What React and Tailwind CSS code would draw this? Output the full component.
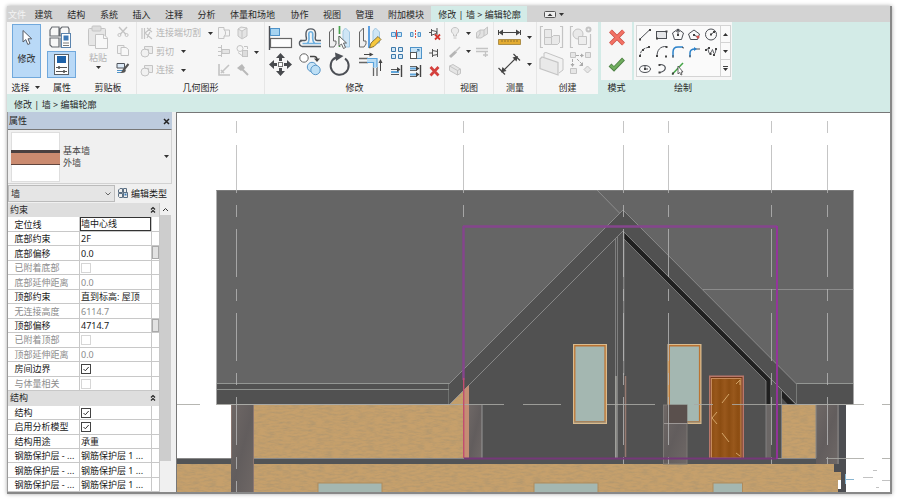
import React from "react";

function Icon({ w = 12, h = 12, box, className = "", children }) {
  return (
    <svg
      width={w}
      height={h}
      viewBox={box || `0 0 ${w} ${h}`}
      fill="none"
      className={"block shrink-0 " + className}
    >
      {children}
    </svg>
  );
}

const Arrow = ({ className = "" }) => (
  <Icon w={5} h={3} className={className}>
    <path d="M0 0H5L2.5 3Z" fill="#333" />
  </Icon>
);

function Panel({ width, label, border = true, teal, arrow, children }) {
  return (
    <div className={`flex shrink-0 flex-col bg-[#f6f6f6] ${width} ${border ? "border-r border-[#e6e6e6]" : ""}`}>
      <div className="h-[58px] shrink-0">{children}</div>
      <div className={`flex h-[14px] items-center justify-center gap-[5px] pt-px ${teal ? "bg-[#d3ebe7]" : ""}`}>
        <span>{label}</span>
        {arrow && <Arrow />}
      </div>
    </div>
  );
}

const G = "#c4c4c4";
const D = "#4c4f55";
const B = "#4f93c9";

/* ---- ribbon panels ---- */

function SelectPanel() {
  return (
    <Panel width="w-[37px]" label="选择" border={false} arrow>
      <div className="ml-[5px] flex h-full items-start pt-[2px]">
        <div className="flex h-[54px] w-[29px] flex-col items-center border border-[#70a8dc] bg-[#b9d9f7]">
          <Icon w={12} h={18} className="mt-[4px]">
            <path d="M2 1.5V13L4.8 10.6L6.8 15.5L9 14.5L7 9.8H10.7Z" fill="#fff" stroke="#555b66" strokeWidth="1" />
          </Icon>
          <span className="mt-[6px]">修改</span>
        </div>
      </div>
    </Panel>
  );
}

function PropertiesPanel() {
  return (
    <Panel width="w-[36px]" label="属性" border={false}>
      <div className="flex h-full flex-col items-start pl-[3px] pt-[3px]">
        <Icon w={28} h={26}>
          <path d="M3 5L5 2H12V11H3ZM13 4L15 2H21L22 4V11H13ZM3 13H12V22H5L3 20ZM14 13H18V22H14Z" stroke="#666a70" strokeWidth="1.2" fill="#f7f7f7" />
          <rect x="14.5" y="8.5" width="9" height="14" fill="#fff" stroke="#5b84ae" />
          <rect x="16.5" y="10.5" width="5" height="5" fill="#3d78b5" />
          <path d="M16 18H22M16 20.5H22" stroke="#555" strokeWidth=".8" />
        </Icon>
        <div className="flex h-[27px] w-[29px] items-center justify-center border border-[#70a8dc] bg-[#b9d9f7]">
          <Icon w={17} h={23}>
            <rect x="1.5" y="1.5" width="14" height="20" fill="#fff" stroke="#5c6167" />
            <rect x="4" y="3" width="9" height="7" fill="#1e62a8" />
            <path d="M3 14.5H14M3 18.500H14" stroke="#555" />
            <path d="M6 13V16M11 17V20" stroke="#555" strokeWidth="1.5" />
          </Icon>
        </div>
      </div>
    </Panel>
  );
}

function ClipboardPanel() {
  return (
    <Panel width="w-[57px]" label="剪贴板">
      <div className="flex h-full pl-[7px] pt-[3px]">
        <div className="flex w-[22px] flex-col items-center text-[#b4b4b4]">
          <Icon w={22} h={25}>
            <rect x="1.500" y="3.500" width="17" height="17" rx="1" fill="#e6e6e6" stroke={G} />
            <rect x="5" y="1" width="9" height="5" rx="1" fill="#ddd" stroke={G} />
            <path d="M8.500 9.500H17L20.500 13V23.500H8.500Z" fill="#f8f8f8" stroke={G} />
            <path d="M16.500 10V13.500H20" stroke={G} />
          </Icon>
          <span className="mt-[2px] whitespace-nowrap">粘贴</span>
          <Arrow className="mt-[2px]" />
        </div>
        <div className="ml-[7px] flex flex-col gap-[4px]">
          <Icon w={14} h={14}>
            <path d="M3 2L10 9.500M11 2L4 9.500" stroke={G} strokeWidth="1.400" />
            <circle cx="3.400" cy="10" r="1.500" stroke={G} /><circle cx="10.600" cy="10" r="1.500" stroke={G} />
          </Icon>
          <Icon w={14} h={14}>
            <path d="M1.500 2.500H8V10.500H1.500Z" fill="#f3f3f3" stroke={G} />
            <path d="M5 4.500H10L12.500 6.500V12.500H5Z" fill="#f8f8f8" stroke={G} />
          </Icon>
          <Icon w={14} h={15}>
            <path d="M1 2.500H8.500V7H1Z" fill="#dceaf7" stroke="#50555d" />
            <path d="M1 9.500H7M1 11.500H5" stroke="#4f93c9" />
            <path d="M12.500 3L8 8.500" stroke="#555" strokeWidth="2" />
            <path d="M8 7.500C6 8 6.500 11 4 12C8 12.500 10 11 9.800 9Z" fill="#555" />
          </Icon>
        </div>
      </div>
    </Panel>
  );
}

const StackIcon = () => (
  <Icon w={14} h={13}>
    <path d="M4.500 4V1.500H12.500V8.500H9" fill="#ececec" stroke={G} />
    <circle cx="5" cy="8" r="4" fill="#f1f1f1" stroke={G} />
    <path d="M5 4.500H8.500V8" stroke={G} />
  </Icon>
);

function GeometryPanel() {
  return (
    <Panel width="w-[128px]" label="几何图形">
      <div className="flex h-full pl-[3px] pt-[2px] text-[#b4b4b4]">
        <div className="flex w-[73px] flex-col">
          <div className="flex h-[18px] items-center">
            <Icon w={14} h={13}>
              <path d="M2 1V12M4.500 1V12M5 6L11 1M5 6L12 12M7 1L12 5M7 11L10 5" stroke={G} strokeWidth="1.200" />
            </Icon>
            <span className="ml-[2px] whitespace-nowrap">连接端切割</span>
            <Arrow className="ml-auto" />
          </div>
          <div className="flex h-[19px] items-center">
            <StackIcon /><span className="ml-[2px]">剪切</span><Arrow className="ml-[7px]" />
          </div>
          <div className="flex h-[18px] items-center">
            <StackIcon /><span className="ml-[2px]">连接</span><Arrow className="ml-[7px]" />
          </div>
        </div>
        <div className="ml-[3px] grid w-[37px] grid-cols-2 grid-rows-[18px_18px_19px] items-center pl-px">
          <Icon w={15} h={14}>
            <path d="M1.500 1.500H7V4H12.500V10H7V12.500H1.500Z" fill="#f4f4f4" stroke={G} /><path d="M7 4C9 4 9 10 7 10" stroke={G} />
          </Icon>
          <Icon w={14} h={14} className="ml-[2px]">
            <path d="M1 3L5 5L10 2V10L5 13L1 10ZM5 5V12M1 3L4 1L10 2" fill="#e4e4e4" stroke={G} />
          </Icon>
          <Icon w={15} h={14}>
            <path d="M4.500 1V13" stroke={G} /><path d="M5 5.500H12.500V9.500H5ZM1 3.500H4M1 7.500H4M1 11.500H4" fill="#e4e4e4" stroke={G} />
          </Icon>
          <Icon w={15} h={14} className="ml-px">
            <circle cx="4" cy="4.500" r="3" stroke={G} /><rect x="6.500" y="6.500" width="5" height="6" stroke={G} fill="#ddd" />
            <path d="M8 2.500H11.500V5M2 8.500L6 11.500" stroke={G} />
          </Icon>
          <Icon w={15} h={14}>
            <path d="M2 1V12H13M4 10L12 2M4 7L7 10" stroke={G} strokeWidth="1.600" />
          </Icon>
          <Icon w={15} h={14} className="ml-px">
            <path d="M1 5L6 1L9 5L5 8Z" fill="#b9b9b9" /><path d="M6 6L12 12" stroke="#b9b9b9" strokeWidth="2" />
          </Icon>
        </div>
        <Arrow className="ml-px mt-[27px]" />
      </div>
    </Panel>
  );
}

function ModifyPanel() {
  return (
    <Panel width="w-[180px]" label="修改">
      <div className="flex h-full pl-[3px] pt-[3px]">
        <div className="grid grid-cols-[30px_30px_30px_30px] grid-rows-[27px_27px]">
          <Icon w={26} h={26}>
            <path d="M1.500 1V25" stroke={D} strokeWidth="1.400" />
            <rect x="2.500" y="3.500" width="9" height="7" fill="#a5d3f1" stroke={B} />
            <rect x="2.500" y="13.500" width="21" height="9" fill="#fdfdfd" stroke="#666" strokeWidth="1.200" />
          </Icon>
          <Icon w={26} h={26}>
            <path d="M2 15.500H7C9 15.500 8.500 13 8 11V8C8.500 2.500 17 2.500 17.500 8V11C17 13 17 15.500 19 15.500H23" stroke="#555b62" strokeWidth="1.400" />
            <path d="M23 21.500H4C.5 20.500 .5 16 4 15.500" stroke="#555b62" strokeWidth="1.300" />
            <path d="M23 18.500H4.500M9 18.500C12 17 11 13 10.800 9C11 6 14.500 6 14.800 9C14.500 13 14 17 17 18.500" stroke="#6fb0df" strokeWidth="1.700" />
          </Icon>
          <Icon w={26} h={26}>
            <path d="M1.500 22V7L5.500 3V16H8V19L6 22Z" fill="#f0f0f0" stroke="#666" />
            <path d="M21.500 22V7L17.500 3L15 6V19L18 22Z" fill="#cfe6f6" stroke="#a3c8e2" />
            <path d="M11.500 1V22" stroke="#49a44d" strokeWidth="1.700" strokeDasharray="8 2" />
            <path d="M11 11V21L13.500 19L15.500 23.500L17.500 22.500L15.500 18H18.500Z" fill="#fff" stroke="#555" strokeWidth=".9" />
          </Icon>
          <Icon w={26} h={26}>
            <path d="M1.500 22V7L5.500 3V16H8V19L6 22Z" fill="#f0f0f0" stroke="#666" />
            <path d="M21.500 18V7L17.500 3L15 6V18Z" fill="#cfe6f6" stroke="#a3c8e2" />
            <path d="M11 1V23" stroke="#398cdd" strokeWidth="1.600" />
            <path d="M11.500 23L13 18L20 11.500L23 14.500L16 21.500Z" fill="#f6c83e" stroke="#6d5b29" strokeWidth=".8" />
          </Icon>
          <Icon w={26} h={26}>
            <path d="M12.500 3V9M12.500 16V22M3 12.500H9M16 12.500H22" stroke="#484a4e" strokeWidth="3" />
            <path d="M8 6H17L12.500 1ZM8 19H17L12.500 24ZM6 8V17L1 12.500ZM19 8V17L24 12.500Z" fill="#484a4e" />
            <rect x="10.500" y="10.500" width="4" height="4" fill="#fff" stroke="#777" />
          </Icon>
          <Icon w={26} h={26}>
            <circle cx="6" cy="6" r="4.200" fill="#fff" stroke="#666" />
            <path d="M12 4.500H16C18.500 4.500 19 6 19 8" stroke="#444" strokeWidth="1.400" /><path d="M16 6.500H22L19 10Z" fill="#444" />
            <circle cx="14" cy="15" r="4.700" fill="#cae5f7" stroke="#5896c8" />
            <circle cx="17.500" cy="18" r="4.700" fill="#bddff5" stroke="#5896c8" />
          </Icon>
          <Icon w={26} h={26}>
            <path d="M17 6.500A9 9 0 1 1 8 5.500" stroke="#4c4f55" strokeWidth="2" /><path d="M7 .5L15.500 4L8 9Z" fill="#4c4f55" />
          </Icon>
          <Icon w={27} h={26}>
            <path d="M1 6.500H10M1 10.500H10M15.500 15V24M19 15V24" stroke="#666" strokeWidth="1.300" />
            <path d="M9 8.500H17.200V16" stroke="#b9dcf4" strokeWidth="3.500" />
            <path d="M9 6.500H19V15M9 10.500H15.500V15" stroke="#5aa3dc" strokeWidth="1.200" />
            <path d="M6 2.500H14M22.500 19V10" stroke="#444" /><path d="M11.500 .5L15.500 2.500L11.500 4.500ZM20.500 11L22.500 7L24.500 11Z" fill="#444" />
          </Icon>
        </div>
        <div className="grid grid-cols-[19px_19px_19px] grid-rows-[18px_19px_18px] items-center pl-[2px]">
          <Icon w={14} h={14}>
            <path d="M1.500 5.500H5.500V9.500H1.500ZM7.500 5.500H11.500V9.500H7.500Z" fill="#cbe4f6" stroke={B} /><path d="M6.500 3V12" stroke="#e14f43" />
          </Icon>
          <Icon w={14} h={14}>
            <path d="M1.500 5.500H4V9.500H1.500ZM9 5.500H11.500V9.500H9Z" fill="#cbe4f6" stroke={B} /><path d="M6.500 3V12" stroke="#e14f43" strokeDasharray="2 1" />
          </Icon>
          <Icon w={14} h={14}>
            <path d="M3.500 2V9M4 3.500L8.500 4.500V6.500L4 8M1 5.500H3.500M9 1V8" stroke="#555" /><path d="M7 7.500L12 12.500M12 7.500L7 12.500" stroke="#d5352d" strokeWidth="1.800" />
          </Icon>
          <Icon w={14} h={14}>
            <path d="M1.500 1.500H5.500V5.500H1.500ZM8.500 1.500H12.500V5.500H8.500ZM1.500 8.500H5.500V12.500H1.500ZM8.500 8.500H12.500V12.500H8.500Z" fill="#d2e8f7" stroke="#3e79a9" />
          </Icon>
          <Icon w={14} h={14}>
            <rect x="1.500" y="1.500" width="11" height="11" fill="#c8e3f5" stroke={B} /><rect x="1.500" y="6.500" width="6" height="6" fill="#fff" stroke="#555" /><path d="M7 6.500L10 3.500M8 3.500H10V5.500" stroke="#3e79a9" />
          </Icon>
          <Icon w={14} h={14}>
            <path d="M4.500 3V11M4.500 4.500L9.500 5.500V8.500L4.500 9.500M9.500 3V11M1 7H4" stroke="#555" />
          </Icon>
          <Icon w={14} h={14}>
            <path d="M1 5.500H8M1 10.500H9" stroke="#555" /><path d="M1 8H9" stroke="#60a6db" strokeWidth="2" /><path d="M11.500 1V13" stroke="#444" strokeWidth="1.400" /><path d="M7 3L10.500 5.500L7 8Z" fill="#444" />
          </Icon>
          <Icon w={14} h={14}>
            <path d="M1 4.500H8M1 10.500H8" stroke="#60a6db" strokeWidth="2" /><path d="M1 2.500H8M1 6.500H8M1 12.500H8" stroke="#666" /><path d="M11.500 1V13" stroke="#444" strokeWidth="1.400" /><path d="M7 2L10.500 4.500L7 7ZM7 8L10.500 10.500L7 13Z" fill="#444" />
          </Icon>
          <Icon w={14} h={14}>
            <path d="M2.500 3L10.500 11.500M10.500 3L2.500 11.500" stroke="#d4403d" strokeWidth="2.700" />
          </Icon>
        </div>
      </div>
    </Panel>
  );
}

function ViewPanel() {
  return (
    <Panel width="w-[49px]" label="视图">
      <div className="grid h-full grid-cols-[18px_7px_16px] grid-rows-[18px_19px_18px] items-center pl-[3px] pt-[2px]">
        <Icon w={15} h={14}><path d="M5.500 10V8C2 6 3 1.500 7 1.500S12 6 8.500 8V10ZM5.500 12H8.500" fill="#ebebeb" stroke={G} /></Icon>
        <Arrow />
        <Icon w={15} h={14} className="ml-[2px]"><path d="M1.500 6.500L5 4H9V10L6 12H1.500ZM9 4L12.500 1V8L9 10M5 4V8L2 12" fill="#e2e2e2" stroke={G} /></Icon>
        <Icon w={15} h={14}><path d="M2 12L8 6.500" stroke="#b5b5b5" strokeWidth="3" /><path d="M7 7L12 2" stroke={G} strokeWidth="1.500" /></Icon>
        <Arrow />
        <Icon w={15} h={14} className="ml-[2px]"><path d="M1 3.500H13M1 6.500H13M8 10H13M10.500 7V12" stroke={G} strokeWidth="1.300" /></Icon>
        <Icon w={15} h={14}><path d="M1.500 3L5 1.500L12.500 6V10.500L9.500 12L1.500 7.500ZM1.500 3L9.500 7.500V12M9.500 7.500L12.500 6" fill="#e5e5e5" stroke={G} /></Icon>
      </div>
    </Panel>
  );
}

function MeasurePanel() {
  return (
    <Panel width="w-[43px]" label="测量">
      <div className="grid h-full grid-cols-[29px_8px] grid-rows-[26px_28px] items-center pl-[4px] pt-[2px]">
        <Icon w={25} h={22}>
          <path d="M4 6.500H19M.5 4V9M22.500 4V9" stroke="#444" /><path d="M5 3.500V9.500L.5 6.500ZM18 3.500V9.500L22.500 6.500Z" fill="#444" />
          <path d="M.5 13.500H22.500V18.500H.5Z" fill="#e4ac32" stroke="#9d7d35" strokeWidth=".8" /><path d="M4 14V16M7 14V16M10 14V16M13 14V16M16 14V16M19 14V16" stroke="#765d25" strokeWidth=".7" />
        </Icon>
        <Arrow />
        <Icon w={25} h={25}>
          <path d="M5 19L18 6M.5 16L7 22.500M15.500 2L22 8.500" stroke="#444" strokeWidth="1.200" /><path d="M3 20.500L4.500 15L8.500 19ZM20 4L14.500 5.500L18.500 9.500Z" fill="#444" />
        </Icon>
        <Arrow />
      </div>
    </Panel>
  );
}

function CreatePanel() {
  return (
    <Panel width="w-[61px]" label="创建" border={false}>
      <div className="grid h-full grid-cols-[30px_28px] grid-rows-[26px_27px] pl-[2px] pt-[3px]">
        <Icon w={26} h={25}>
          <path d="M4 1.500H1.500V22.500H4M21 1.500H23.500V22.500H21" stroke={G} strokeWidth="1.200" />
          <path d="M5.500 4.500H12.500V12.500H5.500ZM5.500 12.500H12.500V19.500H5.500ZM12.500 12.500L14.500 10.500H20.500V17.500L18.500 19.500H12.500Z" fill="#e9e9e9" stroke={G} />
        </Icon>
        <Icon w={26} h={25}>
          <path d="M4 1.500H1.500V22.500H4M21.500 9V22.500H19" stroke={G} strokeWidth="1.200" />
          <circle cx="9" cy="9" r="5" fill="#e9e9e9" stroke={G} /><path d="M9.500 11.500H17.500V19.500H9.500Z" fill="#eee" stroke={G} /><circle cx="19.500" cy="4.500" r="2" stroke={G} strokeWidth="2" />
        </Icon>
        <Icon w={26} h={25}>
          <path d="M5 6V2L7 1.500L24 8V19L20 22" fill="#f2f2f2" stroke={G} /><path d="M1 8L3 6L19 11.500V24L1 17.500Z" fill="#e9e9e9" stroke={G} strokeWidth="1.200" />
        </Icon>
        <Icon w={26} h={25}>
          <path d="M1.500 1.500H6.500V6.500H1.500ZM16.500 1.500H21.500V6.500H16.500ZM1.500 17.500H7.500V22.500H1.500ZM18.500 15L22 18.500L18.500 22L15 18.500Z" fill="#e6e6e6" stroke={G} />
          <path d="M7 4.500H15M3.500 8V16M8 8L14 14" stroke="#aaa" strokeDasharray="3 1" /><path d="M12 2.500L15 4.500L12 6.500ZM1.500 13H5.500L3.500 16ZM14 11V15H10Z" fill="#aaa" />
        </Icon>
      </div>
    </Panel>
  );
}

function ModePanel() {
  return (
    <Panel width="w-[31px]" label="模式" border={false} teal>
      <div className="flex h-full flex-col items-center gap-[9px] pt-[6px]">
        <Icon w={18} h={19}>
          <path d="M2.500 3L15.500 16M15.500 3L2.500 16" stroke="#c94c43" strokeWidth="4" />
          <path d="M2.500 3L15.500 16M15.500 3L2.500 16" stroke="#f27265" strokeWidth="2.600" />
        </Icon>
        <Icon w={18} h={17}>
          <path d="M2 9L6 13L15.500 3" stroke="#4d8144" strokeWidth="4" /><path d="M2.500 9.500L6 12.500L15 3.500" stroke="#70ad5e" strokeWidth="2.400" />
        </Icon>
      </div>
    </Panel>
  );
}

const Dots = ({ pts }) => pts.map(([x, y]) => <rect key={`${x}-${y}`} x={x - 1} y={y - 1} width="2" height="2" fill="#444" />);

const drawTools = [
  <><path d="M1.500 11.500L12 1.500" stroke={D} /><Dots pts={[[2, 11.500], [12, 2]]} /></>,
  <><rect x="1.500" y="3.500" width="10" height="7" fill="#e5e6e8" stroke={D} /><Dots pts={[[2, 10.500], [11.500, 3.500]]} /></>,
  <><path d="M7 1L12.500 5L10.500 11.500H3.500L1.500 5Z" stroke={D} /><path d="M7 7V1M5.500 4L7 1.500L8.500 4" stroke={D} /><Dots pts={[[7, 7]]} /></>,
  <><path d="M7 2L12.500 6L10.500 11.500H3.500L1.500 6Z" stroke={D} /><path d="M7 7L11 9" stroke="#555" /><circle cx="11" cy="9" r="1.500" fill="#d9534f" /><Dots pts={[[7, 7]]} /></>,
  <><circle cx="7" cy="6.500" r="5.500" stroke={D} /><path d="M7 6.500L10.500 3.500" stroke={D} /><Dots pts={[[7, 6.500], [10, 4]]} /></>,
  <><path d="M2 12C2 6 5 3 12 2" stroke={D} strokeDasharray="3 1" /><Dots pts={[[2, 11], [5, 5], [11, 2]]} /></>,
  <><path d="M12 1.500C5 1 2 5 2 11.500" stroke={D} /><Dots pts={[[2, 11], [11.500, 2], [11, 11.500]]} /></>,
  <><path d="M2 12V7C2 3 4 2 7 2H12" stroke="#2b82ca" strokeWidth="1.500" /><path d="M2 10V13M11 2.500L13 3" stroke={D} /></>,
  <><path d="M3 12V8C3 5 5 4 8 4" stroke="#2b82ca" strokeWidth="1.500" /><path d="M8 4H13M3 10V12.500" stroke={D} /><path d="M7 2L10 4L7 6" fill="#2b82ca" /></>,
  <><path d="M2 5C5 0 4 11 6.500 8S8 3 9 6S11 11 12 4" stroke={D} /><Dots pts={[[2, 5], [5, 3], [6.500, 9], [10, 10], [12, 4]]} /></>,
  <><ellipse cx="7" cy="7" rx="5.500" ry="3.500" stroke={D} /><path d="M7 7V4M7 7H10" stroke={D} /><Dots pts={[[7, 7]]} /></>,
  <><path d="M5 2.500C11 2.500 13 8 5 10.500" stroke={D} strokeWidth="1.200" /><Dots pts={[[4.500, 3], [4.500, 10.500]]} /></>,
  <><path d="M1 12.500L12 1" stroke="#44a546" strokeWidth="1.500" /><path d="M7 4V12L8.500 10.500L10 13L11 12.500L10 10H12Z" fill="#fff" stroke="#444" strokeWidth=".8" /><Dots pts={[[2, 11.500]]} /></>,
];

function DrawPanel() {
  return (
    <Panel width="w-[98px]" label="绘制" border={false} teal>
      <div className="flex h-full items-start pl-[2px] pt-[3px]">
        <div className="flex h-[52px] w-[95px] border border-[#d4d4d4] bg-[#fafafa]">
          <div className="grid grid-cols-[17px_16px_16px_17px_16px] grid-rows-[17px_17px_17px] items-center pl-px">
            {drawTools.map((tool, i) => <Icon key={i} w={14} h={14}>{tool}</Icon>)}
          </div>
          <div className="ml-auto flex w-[10px] flex-col divide-y divide-[#d4d4d4] border-l border-[#d4d4d4]">
            <div className="flex flex-1 items-center justify-center"><Arrow className="rotate-180" /></div>
            <div className="flex flex-1 items-center justify-center"><Arrow /></div>
            <div className="flex flex-1 flex-col items-center justify-center gap-px"><i className="h-px w-[5px] bg-[#444]" /><Arrow /></div>
          </div>
        </div>
      </div>
    </Panel>
  );
}

/* ---- top tabs ---- */

const tabs = [
  ["文件", "w-[26.500px] text-[#f4f4f4]"],
  ["建筑", "w-[32.800px]"],
  ["结构", "w-[32.700px]"],
  ["系统", "w-[32.500px]"],
  ["插入", "w-[32.500px]"],
  ["注释", "w-[32.500px]"],
  ["分析", "w-[32.500px]"],
  ["体量和场地", "w-[60.500px]"],
  ["协作", "w-[32.500px]"],
  ["视图", "w-[32.500px]"],
  ["管理", "w-[32.500px]"],
  ["附加模块", "w-[43.500px]"],
];

function TabBar() {
  return (
    <div className="flex h-[16px] shrink-0 items-center bg-[#d3d3d3]">
      <div className="flex pl-px pt-px">
        {tabs.map(([name, cls]) => <span key={name} className={"shrink-0 whitespace-nowrap " + cls}>{name}</span>)}
      </div>
      <div className="flex h-full w-[96px] items-center justify-center whitespace-nowrap bg-[#d3ebe7] pt-px">修改 | 墙 &gt; 编辑轮廓</div>
      <Icon w={12} h={8} className="ml-[17px] mt-px">
        <rect x=".5" y=".5" width="11" height="6" rx="1" fill="#eee" stroke="#555" /><path d="M3.500 5H8.500L6 2.500Z" fill="#333" />
      </Icon>
      <Arrow className="ml-[3px]" />
    </div>
  );
}

/* ---- properties palette ---- */

const rows = [
  { head: "约束" },
  { k: "定位线", v: "墙中心线", focus: true },
  { k: "底部约束", v: "2F" },
  { k: "底部偏移", v: "0.0", btn: true },
  { k: "已附着底部", check: false, off: true },
  { k: "底部延伸距离", v: "0.0", off: true },
  { k: "顶部约束", v: "直到标高: 屋顶" },
  { k: "无连接高度", v: "6114.7", off: true },
  { k: "顶部偏移", v: "4714.7", btn: true },
  { k: "已附着顶部", check: false, off: true },
  { k: "顶部延伸距离", v: "0.0", off: true },
  { k: "房间边界", check: true },
  { k: "与体量相关", check: false, off: true },
  { head: "结构" },
  { k: "结构", check: true },
  { k: "启用分析模型", check: true },
  { k: "结构用途", v: "承重" },
  { k: "钢筋保护层 - ...", v: "钢筋保护层 1 ..." },
  { k: "钢筋保护层 - ...", v: "钢筋保护层 1 ..." },
  { k: "钢筋保护层 - ...", v: "钢筋保护层 1 ..." },
];

function Row({ row }) {
  if (row.head) {
    return (
      <div className="flex h-[14.480px] items-center justify-between bg-[#dedede] pl-[2px] pr-[3px]">
        <span>{row.head}</span>
        <Icon w={6} h={8}><path d="M1 3.500L3 1.500L5 3.500M1 6.500L3 4.500L5 6.500" stroke="#222" strokeWidth="1.200" /></Icon>
      </div>
    );
  }
  return (
    <div className={"flex h-[14.480px] border-b border-[#c8c8c8] bg-white " + (row.off ? "text-[#8b8b8b]" : "text-[#181818]")}>
      <div className="flex w-[72px] items-center whitespace-nowrap border-r border-[#c8c8c8] pl-[6.500px] pt-px">{row.k}</div>
      <div className={"flex w-[71px] items-center overflow-hidden whitespace-nowrap " + (row.focus ? "border border-[#333]" : "pl-px pt-px")}>
        {row.v}
        {row.check !== undefined && (
          <Icon w={10} h={10}>
            <rect x=".5" y=".5" width="9" height="9" fill="#fff" stroke={row.check ? "#444" : "#d6d6d6"} />
            {row.check && <path d="M2.500 5L4.300 6.800L7.700 3" stroke="#333" />}
          </Icon>
        )}
      </div>
      <div className="flex flex-1 border-l border-[#c8c8c8]">
        {row.btn && <div className="h-[13px] w-full border border-[#aaa] bg-[#e2e2e2]" />}
      </div>
    </div>
  );
}

function Palette() {
  return (
    <div className="flex w-[169px] shrink-0 flex-col border-l border-[#9b9b9b] bg-[#f0f0f0]">
      <div className="mr-[4px] flex h-[17px] shrink-0 items-center justify-between bg-[#bdcbdd] pl-px pr-[2px] pt-px">
        <span>属性</span>
        <Icon w={7} h={7}><path d="M1 1L6 6M6 1L1 6" stroke="#222" strokeWidth="1.500" /></Icon>
      </div>
      <div className="mr-[4px] flex h-[55px] shrink-0 items-center border border-l-0 border-[#d2d2d2] border-t-[#777] pl-[3px]">
        <Icon w={50} h={50}>
          <rect x=".5" y=".5" width="48" height="49" fill="#fff" stroke="#dedede" />
          <path d="M0 19.500H49" stroke="#4a4040" strokeWidth="3" />
          <rect x="0" y="21" width="49" height="11.500" fill="#cb8b70" /><path d="M0 32.500H49" stroke="#60453d" />
        </Icon>
        <div className="ml-[2px] leading-[11.500px] text-[#454545]">基本墙<br />外墙</div>
        <Arrow className="ml-auto mr-[2px]" />
      </div>
      <div className="flex h-[19px] shrink-0 items-center">
        <div className="flex h-[17px] w-[107px] items-center justify-between border border-[#bbb] bg-[#e5e5e5] pl-[2px] pr-[3px]">
          <span>墙</span><Icon w={6} h={4}><path d="M.5 .5L3 3L5.500 .5" stroke="#666" /></Icon>
        </div>
        <Icon w={10} h={11} className="ml-[3px]">
          <path d="M.5 2L2 .500H4.500V4.500H.5ZM5.500 .500H8.500V4.500H5.500ZM.5 5.500H4.500V9.500H1.500L.5 8.500ZM5.500 4.500H9.500V9.500H5.500Z" fill="#eee" stroke="#5b6f83" /><rect x="6.500" y="5.500" width="2" height="2" fill="#397cba" />
        </Icon>
        <span className="ml-[3px] text-[#181818]">编辑类型</span>
      </div>
      <div className="flex min-h-0 flex-1 overflow-hidden">
        <div className="w-[152px] shrink-0 border-r border-[#c8c8c8]">
          {rows.map((row, i) => <Row key={i} row={row} />)}
        </div>
        <div className="flex w-[11px] flex-col items-center bg-[#f0f0f0]">
          <div className="flex h-[12px] items-center"><Icon w={7} h={5}><path d="M1 4L3.500 1.500L6 4" stroke="#333" /></Icon></div>
          <div className="h-[246px] w-full bg-[#cdcdcd]" />
        </div>
      </div>
    </div>
  );
}

/* ---- elevation drawing ---- */

const gridX = [236.5, 463.5, 623.5, 668.5, 771.5, 827.5];

function Elevation() {
  return (
    <svg width="714" height="381" viewBox="177 113 714 381" className="block" fill="none">
      <defs>
        <filter id="grain" x="0" y="0" width="100%" height="100%">
          <feTurbulence type="fractalNoise" baseFrequency="0.12 0.5" numOctaves="3" seed="4" />
          <feColorMatrix values="0 0 0 0 .42  0 0 0 0 .3  0 0 0 0 .16  1.6 0 0 0 -.6" />
          <feComposite in2="SourceGraphic" operator="in" result="n" />
          <feMerge><feMergeNode in="SourceGraphic" /><feMergeNode in="n" /></feMerge>
        </filter>
        <linearGradient id="stone" x2="1" y2="1">
          <stop stopColor="#6f6866" /><stop offset=".5" stopColor="#625d5d" /><stop offset="1" stopColor="#6f6866" />
        </linearGradient>
        <linearGradient id="wood" x2=".3" spreadMethod="repeat">
          <stop stopColor="#8c4d12" /><stop offset=".5" stopColor="#99581c" /><stop offset="1" stopColor="#8c4d12" />
        </linearGradient>
      </defs>

      {/* plinth and ground floor walls */}
      <g filter="url(#grain)" fill="#c6a06c">
        <path d="M177 464H834V472H841V480H838V494H177Z" />
        <rect x="254" y="405" width="212" height="53" />
        <path d="M449 405L469 385V458H449Z" />
        <rect x="782" y="405" width="34" height="53" />
      </g>
      <path d="M177 458H839V464H177Z" fill="#525456" />
      <path d="M177 458.500H835" stroke="#898989" />
      <path d="M839 405H846V494H838V489H841V472H834V464H839Z" fill="#4d4e52" />

      {/* roof */}
      <path d="M216.500 190H853.500V384H216.500Z" fill="#656565" />
      <path d="M216.500 190.500H853.500" stroke="#7a7a7a" />
      <path d="M216.500 384H449V404.500H216.500ZM796.500 384H853.500V404.500H796.500Z" fill="#515151" />
      <path d="M216.500 383.500H449V404.500M216.500 389.500H449M796.500 404.500V383.500H853.500" stroke="#a0a3a0" strokeWidth=".8" />
      <path d="M623 210L449 384V405L469 385V458H782V405H796.500V384Z" fill="#515151" />
      <path d="M449 384L623 210L796.500 384M449 405L623 231L796 404M597 190L619.500 213M703 289.500H853.500" stroke="#969696" strokeWidth=".8" />
      <path d="M624 232.500L770 379V404.500H766V381L624 239ZM782 391L795 404.500H788L782 398Z" fill="#202020" />
      <path d="M624 239L766 381V404" stroke="#929292" strokeWidth=".7" />

      {/* wall seams */}
      <path d="M615.500 238V458M617.500 237V458" stroke="#8b8b8b" strokeWidth=".8" />
      <path d="M616 376V458" stroke="#c0c0b8" />
      <path d="M623.700 232V375" stroke="#898989" strokeWidth="1.300" />
      <path d="M625.500 376V457" stroke="#977a70" strokeWidth="1.500" />

      {/* columns */}
      <path d="M231 405H254V494H231Z" fill="url(#stone)" /><path d="M231.500 405V458M253.500 405V494" stroke="#8b7771" />
      <rect x="469" y="405" width="13" height="53" fill="url(#stone)" /><path d="M482 405V458" stroke="#969696" />
      <path d="M464 390L469 385V458H464Z" fill="#c58d74" />
      <rect x="766" y="405" width="5" height="53" fill="#6b6766" /><path d="M766 405V458M781.500 391V458" stroke="#8b8b8b" strokeWidth=".8" />
      <rect x="816" y="405" width="23" height="59" fill="url(#stone)" /><path d="M816 405V458M838 405V464" stroke="#898989" />

      {/* windows */}
      {[573, 667.5].map((x) => (
        <g key={x}>
          <rect x={x} y="344" width="34" height="80" fill="#d9bb8e" />
          <rect x={x + 1.2} y="345" width="31.500" height="77.500" fill="#ba7332" />
          <rect x={x + 2.4} y="346.500" width="29" height="74.500" fill="#a4b7b1" />
          <path d={`M${x + 1} 422H${x + 33}`} stroke="#8e9389" />
        </g>
      ))}
      <rect x="663.500" y="405" width="23.500" height="59" fill="url(#stone)" stroke="#7c7875" />
      <path d="M667.500 405H687V423H667.500Z" fill="#5a504d" /><path d="M664 423.500H687" stroke="#9c9795" />
      {[[318, 64], [534, 64], [713, 29.5]].map(([x, w]) => (
        <rect key={x} x={x} y="483" width={w} height="11" fill="#a4b7b1" stroke="#ae8b5d" />
      ))}

      {/* door */}
      <rect x="709" y="375.500" width="35" height="82.500" fill="#b9776a" />
      <rect x="710.500" y="377" width="32" height="81" fill="#713719" />
      <rect x="711.500" y="378.500" width="29.500" height="79.500" fill="url(#wood)" stroke="#c58a5b" />
      <path d="M736 384L740 380V385M722 403L729 394M717 412L712 418L717 424M722 433L729 442M736 453L740 456" stroke="#d9ae72" strokeWidth=".9" />

      {/* grid lines */}
      {gridX.map((x) => (
        <path key={x} d={`M${x} 121V${x < 300 ? 494 : x === 463.5 ? 220 : 464}`} stroke="#b6b6b6" strokeOpacity=".8" strokeDasharray="12 12 48 12" />
      ))}
      <path d="M177 404.500H200M216 404.500H466M466 404.500H504M523 404.500H561M607 404.500H655M694 404.500H713M732 404.500H864M882 404.500H891M826 458.500H864M882 458.500H891" stroke="#a9a9a5" strokeOpacity=".85" />
      <path d="M863 477.500H873M873 470.500H877M876 487.500H879M882 480.500H891" stroke="#c2c2c2" />
      <path d="M846 479.500H854M845.500 474V484" stroke="#89b5d0" />

      {/* sketch profile of the edited wall */}
      <path d="M463.500 226V380M463 226.500H777" stroke="#85458d" strokeWidth="2.400" />
      <path d="M463.700 378V458" stroke="#c14d70" strokeWidth="1.400" />
      <path d="M464 458.500H777" stroke="#753879" strokeWidth="2" />
      <path d="M777 226V459" stroke="#9a30a2" strokeWidth="1.800" />
      <path d="M177 493H846" stroke="#858585" strokeWidth="2" />
    </svg>
  );
}

export default function App() {
  return (
    <div
      lang="zh-CN"
      className="flex h-[500px] w-[897px] overflow-hidden bg-white pl-[7px] pt-[6px] font-['Noto_Sans','Noto_Sans_CJK_SC',sans-serif] text-[9px] leading-[12px] text-[#282828]"
    >
      <div className="flex h-[488px] w-[885px] flex-col border-b-2 border-r-2 border-[#888] shadow-[0_0_4px_rgba(0,0,0,0.35)]">
        <TabBar />
        <div className="flex h-[72px] shrink-0 bg-[#d3ebe7]">
          <SelectPanel />
          <PropertiesPanel />
          <ClipboardPanel />
          <GeometryPanel />
          <ModifyPanel />
          <ViewPanel />
          <MeasurePanel />
          <CreatePanel />
          <div className="w-[3px] shrink-0" />
          <ModePanel />
          <div className="w-[2px] shrink-0" />
          <DrawPanel />
        </div>
        <div className="flex h-[18px] shrink-0 items-center bg-[#d3ebe7] pl-[7px] pt-[3px]">修改 | 墙 &gt; 编辑轮廓</div>
        <div className="flex min-h-0 flex-1">
          <Palette />
          <div className="min-w-0 flex-1 overflow-hidden border-l border-t border-[#777] bg-white"><Elevation /></div>
        </div>
      </div>
    </div>
  );
}
